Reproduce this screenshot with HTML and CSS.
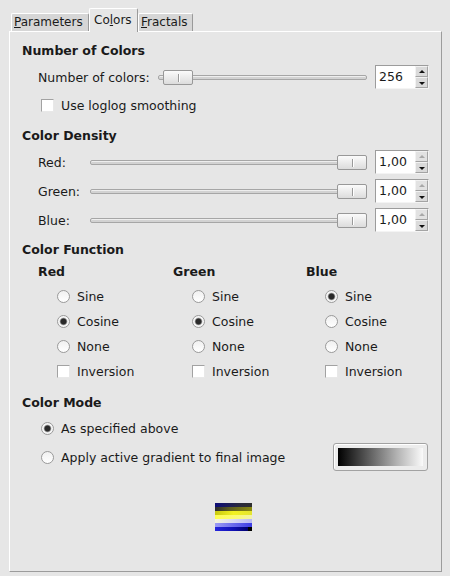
FILE: index.html
```html
<!DOCTYPE html>
<html>
<head>
<meta charset="utf-8">
<link rel="stylesheet" href="styles.css">
</head>
<body>
<div class="tabs">
  <div class="tab tab-params"><u>P</u>arameters</div>
  <div class="tab tab-colors active">Co<u>l</u>ors</div>
  <div class="tab tab-fractals"><u>F</u>ractals</div>
</div>
<div class="notebook">
  <div class="title">Number of Colors</div>
  <div class="row slider-row first-row">
    <span class="label lbl-n">Number of colors:</span>
    <div class="slider"><div class="track"></div><div class="thumb" style="left:5px"></div></div>
    <div class="spin"><span class="spin-value">256</span><div class="spin-arrows"><span class="arr up"></span><span class="arr down"></span></div></div>
  </div>
  <div class="check-row">
    <span class="check"></span><span>Use loglog smoothing</span>
  </div>

  <div class="title t2">Color Density</div>
  <div class="row slider-row d-row">
    <span class="label lbl-d">Red:</span>
    <div class="slider"><div class="track"></div><div class="thumb" style="left:247px"></div></div>
    <div class="spin"><span class="spin-value">1,00</span><div class="spin-arrows"><span class="arr up off"></span><span class="arr down"></span></div></div>
  </div>
  <div class="row slider-row d-row">
    <span class="label lbl-d">Green:</span>
    <div class="slider"><div class="track"></div><div class="thumb" style="left:247px"></div></div>
    <div class="spin"><span class="spin-value">1,00</span><div class="spin-arrows"><span class="arr up off"></span><span class="arr down"></span></div></div>
  </div>
  <div class="row slider-row d-row">
    <span class="label lbl-d">Blue:</span>
    <div class="slider"><div class="track"></div><div class="thumb" style="left:247px"></div></div>
    <div class="spin"><span class="spin-value">1,00</span><div class="spin-arrows"><span class="arr up off"></span><span class="arr down"></span></div></div>
  </div>

  <div class="title t3">Color Function</div>
  <div class="func">
    <div class="col">
      <div class="col-head">Red</div>
      <div class="opt first-opt"><span class="radio"></span><span>Sine</span></div>
      <div class="opt"><span class="radio on"></span><span>Cosine</span></div>
      <div class="opt"><span class="radio"></span><span>None</span></div>
      <div class="opt"><span class="check"></span><span>Inversion</span></div>
    </div>
    <div class="col">
      <div class="col-head">Green</div>
      <div class="opt first-opt"><span class="radio"></span><span>Sine</span></div>
      <div class="opt"><span class="radio on"></span><span>Cosine</span></div>
      <div class="opt"><span class="radio"></span><span>None</span></div>
      <div class="opt"><span class="check"></span><span>Inversion</span></div>
    </div>
    <div class="col">
      <div class="col-head">Blue</div>
      <div class="opt first-opt"><span class="radio on"></span><span>Sine</span></div>
      <div class="opt"><span class="radio"></span><span>Cosine</span></div>
      <div class="opt"><span class="radio"></span><span>None</span></div>
      <div class="opt"><span class="check"></span><span>Inversion</span></div>
    </div>
  </div>

  <div class="title t4">Color Mode</div>
  <div class="mode-row m1">
    <span class="radio on"></span><span>As specified above</span>
  </div>
  <div class="mode-row m2">
    <span class="radio"></span><span>Apply active gradient to final image</span>
    <div class="grad-btn"><div class="grad"></div></div>
  </div>

  <div class="preview">
    <div class="band b1"></div>
    <div class="band b2"></div>
    <div class="band b3"></div>
    <div class="band b4"></div>
    <div class="band b5"></div>
    <div class="band b6"></div>
    <div class="band b7"></div>
  </div>
</div>
</body>
</html>
```
FILE: styles.css
```css
* { box-sizing: border-box; }
html, body { margin: 0; padding: 0; }
body {
  width: 450px;
  height: 576px;
  overflow: hidden;
  background: #e6e6e6;
  font-family: "DejaVu Sans", "Liberation Sans", sans-serif;
  font-size: 12.5px;
  color: #1a1a1a;
}
u { text-decoration: underline; text-underline-offset: 1px; }

/* tabs */
.tabs {
  display: flex;
  align-items: flex-end;
  height: 31px;
  padding-left: 11px;
  position: relative;
  z-index: 1;
}
.tab {
  height: 18px;
  line-height: 16px;
  background: #d6d6d6;
  border: 1px solid;
  border-color: #ffffff #9a9a9a transparent #ffffff;
  border-bottom: none;
  border-radius: 2px 2px 0 0;
  padding-left: 2px;
  white-space: nowrap;
  font-size: 12px;
}
.tab-params { width: 78px; }
.tab-colors { width: 49px; padding-left: 4px; }
.tab-fractals { width: 55px; }
.tab.active {
  height: 24px;
  line-height: 22px;
  margin-bottom: -1px;
  background: #e6e6e6;
}

/* notebook page */
.notebook {
  margin-left: 9px;
  width: 433px;
  height: 541px;
  border: 1px solid;
  border-color: #ffffff #9c9c9c #9c9c9c #ffffff;
  padding: 10px 12px 0 12px;
}
.title {
  font-weight: bold;
  height: 18px;
  line-height: 18px;
}
.t2 { margin-top: 12px; }
.t3 { margin-top: 9px; }
.t4 { margin-top: 10px; }

.row {
  display: flex;
  align-items: center;
  margin-left: 16px;
}
.slider-row { height: 24px; }
.first-row { margin-top: 5px; }
.d-row { margin-top: 5px; }
.label { flex: none; white-space: nowrap; }
.lbl-n { width: 120px; }
.lbl-d { width: 52px; }

.slider {
  flex: 1;
  position: relative;
  height: 15px;
  display: flex;
  align-items: center;
}
.track {
  flex: 1;
  height: 5px;
  border: 1px solid #a6a6a6;
  border-radius: 2px;
  background: #d2d2d2;
  box-shadow: inset 0 1px #eeeeee;
}
.thumb {
  position: absolute;
  top: 0;
  width: 30px;
  height: 15px;
  border: 1px solid #989898;
  border-radius: 2px;
  background: linear-gradient(#fbfbfb, #dcdcdc);
}
.thumb::after {
  content: "";
  position: absolute;
  left: 14px;
  top: 3px;
  width: 1px;
  height: 8px;
  background: #9a9a9a;
  box-shadow: 1px 0 #ffffff;
}

.spin {
  flex: none;
  display: flex;
  margin-left: 8px;
  width: 54px;
  height: 24px;
  border: 1px solid;
  border-color: #9c9c9c #f4f4f4 #f4f4f4 #9c9c9c;
  background: #ffffff;
}
.spin-value {
  flex: 1;
  padding-left: 3px;
  line-height: 22px;
}
.spin-arrows {
  width: 13px;
  display: flex;
  flex-direction: column;
}
.arr {
  flex: 1;
  position: relative;
  background: #dadada;
  border: 1px solid;
  border-color: #f2f2f2 #a4a4a4 #a4a4a4 #f2f2f2;
}
.arr::after {
  content: "";
  position: absolute;
  left: 3px;
  width: 0;
  height: 0;
  border-left: 3px solid transparent;
  border-right: 3px solid transparent;
}
.arr.up::after { top: 3px; border-bottom: 3px solid #111; }
.arr.down::after { top: 4px; border-top: 3px solid #111; }
.arr.off { background: #e2e2e2; }
.arr.off::after { border-bottom-color: #a8a8a8; }

/* check + radio */
.check {
  flex: none;
  width: 13px;
  height: 13px;
  background: #ffffff;
  border: 1px solid;
  border-color: #a2a2a2 #e8e8e8 #e8e8e8 #a2a2a2;
}
.radio {
  flex: none;
  width: 13px;
  height: 13px;
  border-radius: 50%;
  border: 1px solid #9a9a9a;
  background: linear-gradient(#f0f0f0, #ffffff);
}
.radio.on {
  background: radial-gradient(circle, #2a2a2a 0, #2a2a2a 2.6px, #9a9a9a 3.4px, #f4f4f4 4.2px, #ffffff 100%);
}

.check-row {
  display: flex;
  align-items: center;
  gap: 7px;
  height: 20px;
  margin-top: 6px;
  margin-left: 19px;
}

.func {
  display: grid;
  grid-template-columns: 135px 133px 1fr;
  margin-left: 16px;
  margin-top: 4px;
}
.col { display: flex; flex-direction: column; }
.col-head {
  font-weight: bold;
  height: 18px;
  line-height: 18px;
}
.opt {
  display: flex;
  align-items: center;
  gap: 7px;
  height: 25px;
  padding-left: 19px;
}
.first-opt { margin-top: 3px; }

.mode-row {
  display: flex;
  align-items: center;
  gap: 7px;
  margin-left: 19px;
}
.m1 { height: 24px; margin-top: 4px; }
.m2 { height: 28px; margin-top: 3px; }
.grad-btn {
  margin-left: auto;
  margin-right: 1px;
  width: 95px;
  height: 28px;
  border: 1px solid #a2a2a2;
  border-radius: 3px;
  background: #ececec;
  box-shadow: inset 1px 1px #ffffff;
  padding: 4px;
}
.grad {
  height: 100%;
  background: linear-gradient(to right, #000000, #5a5a5a 35%, #b4b4b4 70%, #fafafa);
}

.preview {
  margin-top: 32px;
  margin-left: 193px;
  width: 37px;
  height: 28px;
  display: flex;
  flex-direction: column;
}
.band { height: 4px; }
.b1 { background: linear-gradient(to right, #0c0c78, #2a2a3a 70%, #2e2e2e); }
.b2 { background: linear-gradient(to right, #2a2a30, #5c5c20 40%, #8a8a10); }
.b3 { background: linear-gradient(to right, #c8c810, #f2f220 50%, #e4e430); }
.b4 { background: linear-gradient(to right, #ffff50, #fafa78 60%, #f2f2a8); }
.b5 { background: linear-gradient(to right, #f4f4dc, #d8d8f4 50%, #b8b8f4); }
.b6 { background: linear-gradient(to right, #9c9cf4, #6a6aec 50%, #3c3ce4); }
.b7 { background: linear-gradient(to right, #2626dc, #1010b4 50%, #000070 88%, #000000 90%); }
```
